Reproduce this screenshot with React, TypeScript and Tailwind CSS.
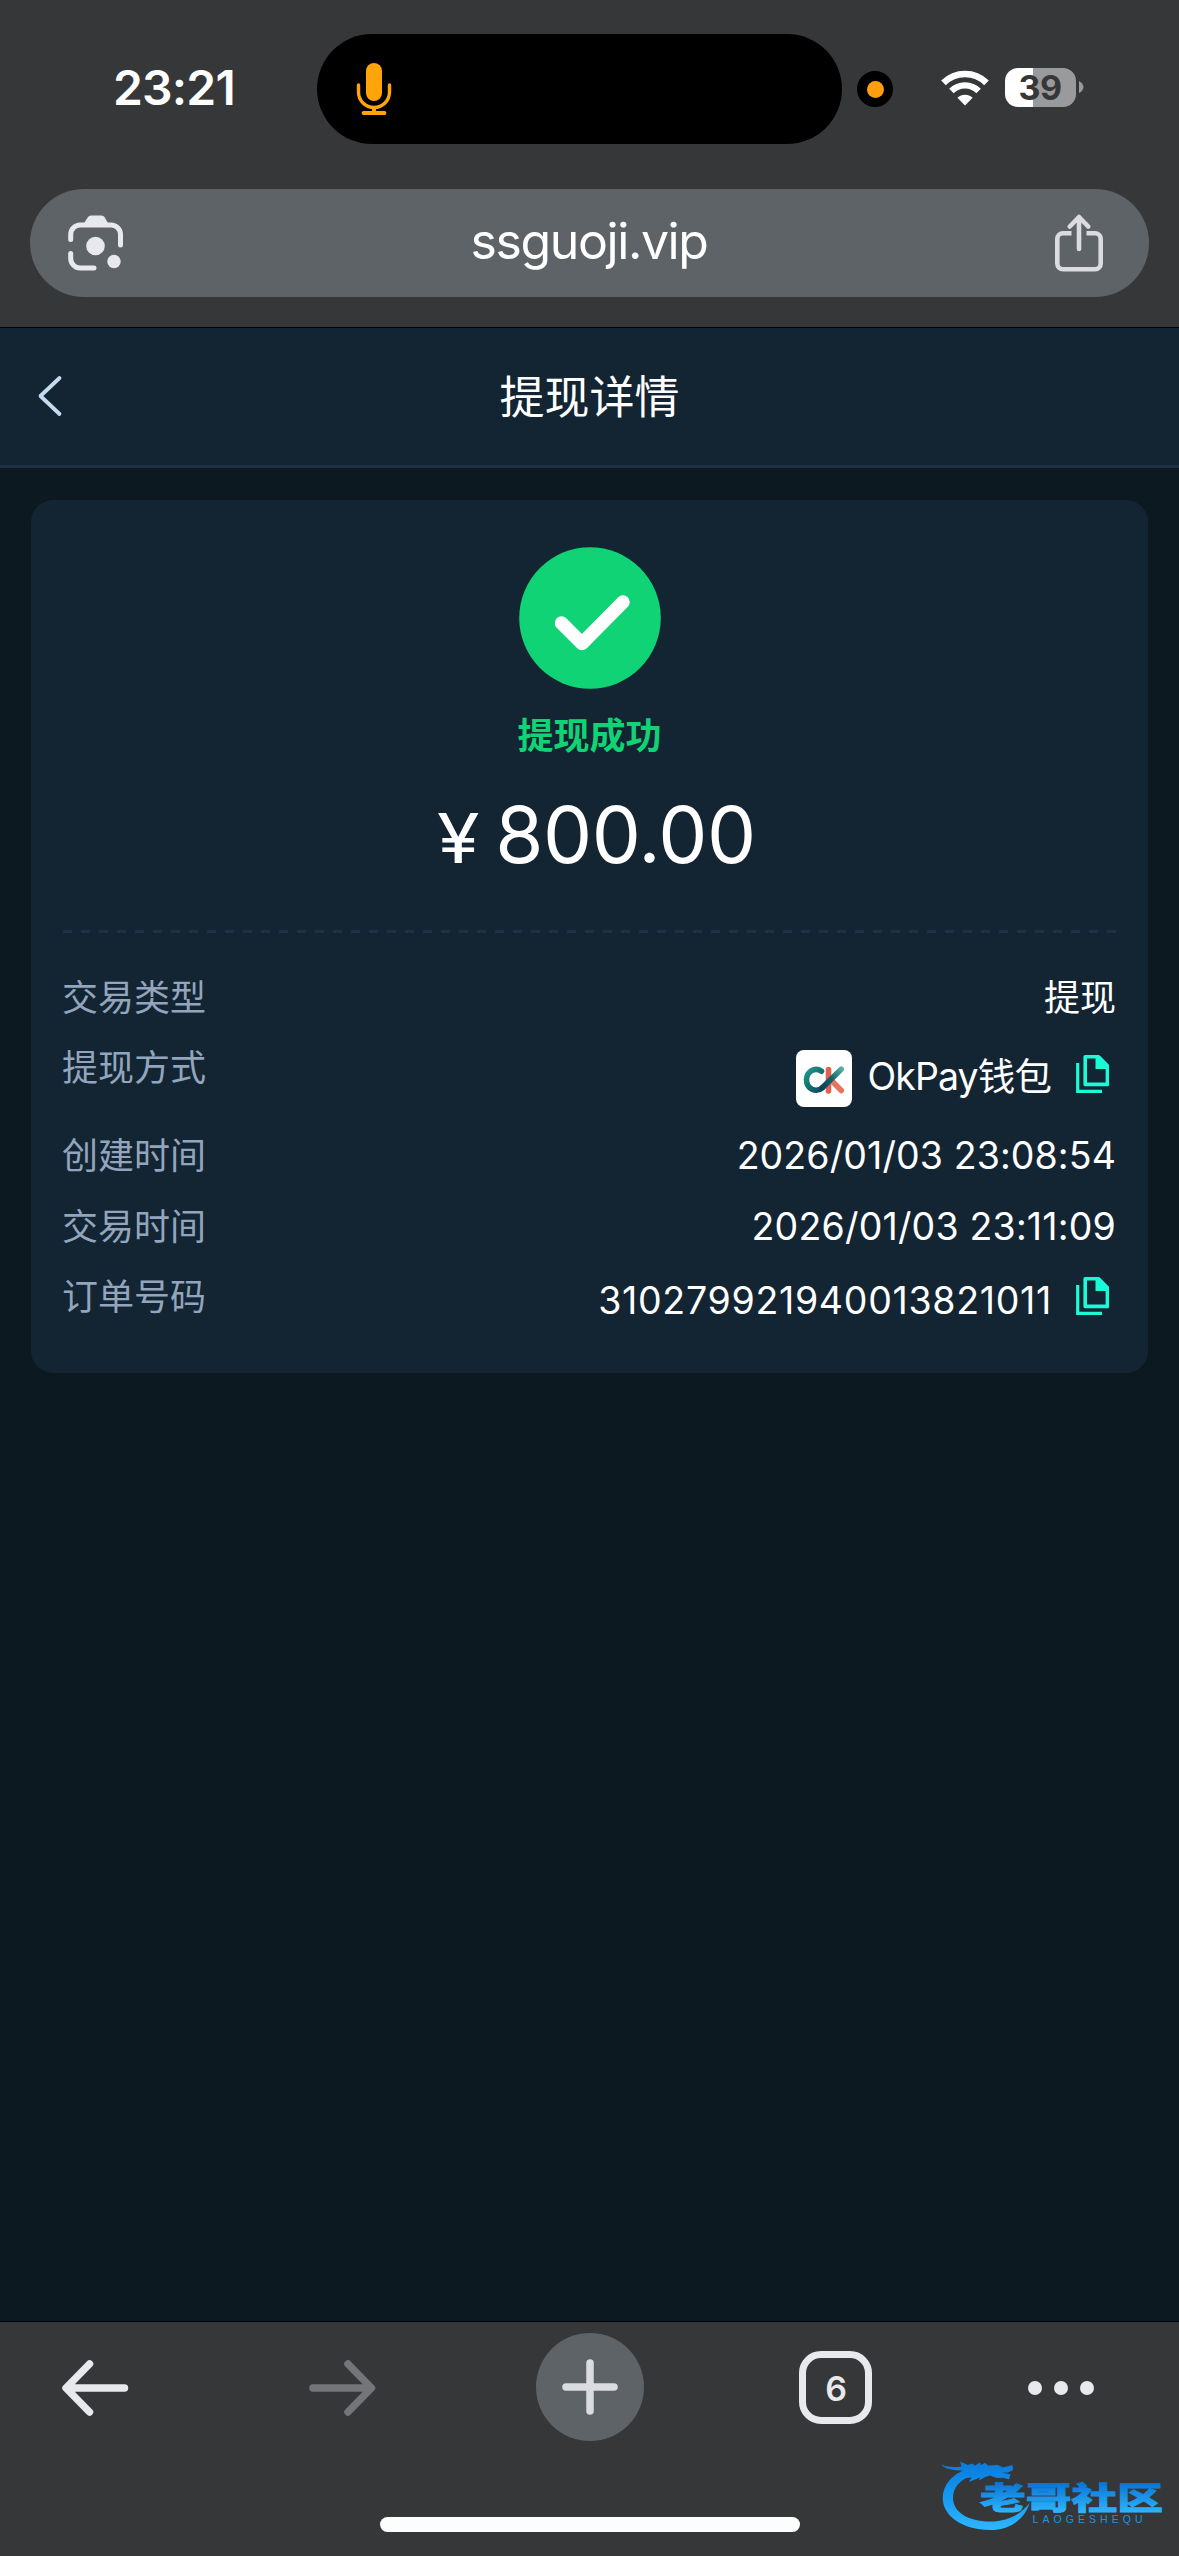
import type { ReactNode } from 'react';

const latin = "font-['Inter','Noto_Sans_CJK_SC',sans-serif]";

const MicIcon = () => (
  <svg width="36" height="54" viewBox="0 0 36 54" fill="none" stroke="#ffa50a" strokeLinecap="round">
    <rect x="10" y="1" width="16" height="38" rx="8" fill="#ffa50a" stroke="none" />
    <path d="M2.5 23v7a15.5 15.5 0 0 0 31 0v-7" strokeWidth="3.4" />
    <path d="M18 46v5" strokeWidth="4" />
    <path d="M7.5 51h21" strokeWidth="3.8" />
  </svg>
);

const WifiIcon = () => (
  <svg width="48" height="36" viewBox="0 0 48 36" fill="none" stroke="#fff">
    <path d="M2.5 12.8a30.5 30.5 0 0 1 43 0" strokeWidth="6.6" />
    <path d="M10.4 21a19.3 19.3 0 0 1 27.2 0" strokeWidth="6.4" />
    <path d="M24 35.5 16.4 27.8a10.8 10.8 0 0 1 15.2 0Z" fill="#fff" stroke="none" />
  </svg>
);

const LensIcon = () => (
  <svg width="56" height="56" viewBox="0 0 56 56" fill="none" stroke="#e8e9ed" strokeWidth="5" strokeLinecap="round">
    <path d="M2.7 24.5v-5A9.5 9.5 0 0 1 12.2 10H43a9.5 9.5 0 0 1 9.5 9.5V30" />
    <path d="M2.7 38.5v5a9.5 9.5 0 0 0 9.5 9.5H26" />
    <path d="M15.5 9 20 2Q21 .5 23 .5h10.500Q35.500 .5 36.500 2l4 7Z" fill="#e8e9ed" stroke="none" />
    <circle cx="27.5" cy="31" r="9.3" fill="#e8e9ed" stroke="none" />
    <circle cx="46" cy="46.5" r="6.7" fill="#e8e9ed" stroke="none" />
  </svg>
);

const ShareIcon = () => (
  <svg width="50" height="58" viewBox="0 0 50 58" fill="none" stroke="#dbdce1" strokeWidth="4.6" strokeLinecap="round" strokeLinejoin="round">
    <path d="M17.5 19.3H9a5.7 5.7 0 0 0-5.7 5.7v24.5A5.7 5.7 0 0 0 9 55.2h32a5.7 5.7 0 0 0 5.7-5.7V25a5.7 5.7 0 0 0-5.7-5.7h-8.500" strokeLinecap="butt" />
    <path d="M25 35V3.5M15.8 12.5 25 3l9.2 9.5" />
  </svg>
);

const CopyIcon = () => (
  <svg width="33" height="38" viewBox="0 0 33 38" fill="none">
    <path d="M1.7 8v28.3H26" stroke="#1bfbd8" strokeWidth="3.2" />
    <path d="M9.2 1.8h13.3l8.9 9v18.6H9.2Z" stroke="#1bfbd8" strokeWidth="3.6" strokeLinejoin="round" />
    <path d="M19.5 1h4l9 9.5v3.4h-13Z" fill="#1bfbd8" />
  </svg>
);

const OkPayLogo = () => (
  <svg width="56" height="57" viewBox="0 0 56 57" className="rounded-lg bg-white" fill="none" strokeWidth="5.6" strokeLinecap="round">
    <defs>
      <linearGradient id="ok-ring" x1="8" y1="20" x2="30" y2="40" gradientUnits="userSpaceOnUse">
        <stop stopColor="#1f9d8c" />
        <stop offset="1" stopColor="#0b4157" />
      </linearGradient>
      <linearGradient id="ok-arm" x1="46" y1="18" x2="26" y2="40" gradientUnits="userSpaceOnUse">
        <stop stopColor="#55b5a2" />
        <stop offset=".5" stopColor="#12626c" />
        <stop offset="1" stopColor="#0b4157" />
      </linearGradient>
    </defs>
    <path d="M32.5 19.5v21.5" stroke="#e2604f" />
    <path d="M36 31 45.3 40.5" stroke="#e9735f" />
    <path d="M25.5 21.200C19 16.500 10.500 21.500 10.500 29.800c0 9 9.500 13.500 16 7.800" stroke="url(#ok-ring)" />
    <path d="M26.500 37.600 45.200 19.300" stroke="url(#ok-arm)" />
  </svg>
);

const StatusBar = () => (
  <div className="flex h-[189px] items-start">
    <div className={`${latin} mt-[58px] ml-[113px] w-[204px] text-[48px] leading-[60px] font-semibold tracking-[-0.8px] text-white`}>23:21</div>
    <div className="mt-[34px] flex h-[110px] w-[525px] items-center rounded-full bg-black pl-[39px]">
      <MicIcon />
    </div>
    <div className="mt-[71px] ml-[15px] flex size-9 items-center justify-center rounded-full bg-black">
      <div className="size-[17px] rounded-full bg-[#ff9f0f]" />
    </div>
    <div className="mt-[70px] ml-[48px]">
      <WifiIcon />
    </div>
    <div className={`${latin} mt-[68px] ml-4 flex h-[39px] w-[71px] items-center justify-center rounded-[13px] bg-[linear-gradient(90deg,#fff_28px,#9a9a9c_28px)] pr-px text-[34px] font-bold tracking-[-0.5px] text-[#363738]`}>
      39
    </div>
    <svg width="5" height="14" viewBox="0 0 5 14" className="mt-[80px] ml-[3px]">
      <path d="M0 1q4 2 4.500 6Q4 11 0 13Z" fill="#9a9a9c" />
    </svg>
  </div>
);

const AddressBar = () => (
  <div className="mx-[30px] flex h-[108px] items-center justify-between rounded-full bg-[#5e6367] pr-[45px] pl-[38px]">
    <LensIcon />
    <div className={`${latin} mb-[4px] text-[50px] leading-none tracking-[-1.4px] text-white`}>ssguoji.vip</div>
    <ShareIcon />
  </div>
);

const PageHeader = () => (
  <div className="mt-[30px] grid h-[141px] grid-cols-[1fr_auto_1fr] items-center border-t border-b-[3px] border-t-black border-b-[#1a3149] bg-[#132433]">
    <svg width="26" height="42" viewBox="0 0 26 42" fill="none" className="mb-[2px] ml-[37px]">
      <path d="M22.500 3 3.500 21l19 18" stroke="#c5dbf0" strokeWidth="3.800" strokeLinecap="round" strokeLinejoin="round" />
    </svg>
    <h1 className={`${latin} mt-[2px] text-[45px] leading-none text-white`}>提现详情</h1>
  </div>
);

interface RowProps {
  label: string;
  className: string;
  children: ReactNode;
}

const Row = ({ label, className, children }: RowProps) => (
  <div className={`flex items-start justify-between ${className}`}>
    <span className="text-[36px] leading-[56px] text-[#92a5bc]">{label}</span>
    <div className="flex items-start text-[37.500px] leading-[55px] text-white">{children}</div>
  </div>
);

const DetailCard = () => (
  <div className={`${latin} mx-[31px] mt-8 h-[873px] rounded-[22px] bg-[#132433] pt-[47px] pr-8 pl-[31px]`}>
    <div className="flex flex-col items-center pl-px">
      <svg width="142" height="142" viewBox="0 0 142 142" fill="none">
        <circle cx="71" cy="71" r="70.800" fill="#0fd375" />
        <path d="m42.500 76 20.500 20.500L104 55" stroke="#fff" strokeWidth="13.500" strokeLinecap="round" strokeLinejoin="round" />
      </svg>
      <div className="mt-5 text-[36px] leading-[54px] font-bold text-[#0fd375]">提现成功</div>
      <div className="mt-6 flex items-baseline pl-3 leading-[96px] text-white">
        <span className="origin-left translate-x-[2px] scale-x-[1.12] text-[69px]">¥</span>
        <span className="ml-[22px] text-[78px] tracking-[-0.500px]">800.00</span>
      </div>
    </div>
    <div className="mt-[44px] ml-px h-[3px] bg-[repeating-linear-gradient(90deg,#1a3349_0_9px,transparent_9px_18px)]" />
    <div className="mt-[37px] flex flex-col">
      <Row label="交易类型" className="h-[70px]">
        <span className="text-[36px] leading-[56px]">提现</span>
      </Row>
      <Row label="提现方式" className="h-[88px]">
        <div className="mt-[10px]">
          <OkPayLogo />
        </div>
        <span className="mt-[9px] ml-4 tracking-[-0.900px]">OkPay钱包</span>
        <div className="mt-[15px] mr-[7px] ml-[25px]">
          <CopyIcon />
        </div>
      </Row>
      <Row label="创建时间" className="h-[71px]">
        <span className="tracking-[0.100px]">2026/01/03 23:08:54</span>
      </Row>
      <Row label="交易时间" className="h-[70px]">
        <span className="tracking-[0.180px]">2026/01/03 23:11:09</span>
      </Row>
      <Row label="订单号码" className="h-[60px]">
        <span className="mt-[4px] tracking-[0.700px]">310279921940013821011</span>
        <div className="mt-[8px] mr-[7px] ml-[24px]">
          <CopyIcon />
        </div>
      </Row>
    </div>
  </div>
);

const Watermark = () => (
  <svg width="230" height="84" viewBox="0 0 230 84" className="absolute top-[2452px] left-[938px]">
    <defs>
      <linearGradient id="wm" x1="0" y1="8" x2="0" y2="78" gradientUnits="userSpaceOnUse">
        <stop stopColor="#0a78da" />
        <stop offset=".4" stopColor="#0f92ee" />
        <stop offset="1" stopColor="#2db7ff" />
      </linearGradient>
      <linearGradient id="wm-text" x1="0" y1="0" x2="0" y2="1">
        <stop offset=".2" stopColor="#0874d6" />
        <stop offset=".9" stopColor="#2fb8ff" />
      </linearGradient>
    </defs>
    <path d="M29 17C14 22 4.700 33 4.700 46c0 18 20 32 47.300 32 20 0 35-11 39.500-27C83 62 70 69.500 52 69.500 30 69.500 15 60 15 46c0-11 7-19 21-23Z" fill="url(#wm)" />
    <path d="M3 12.500c7 2.500 12 2.800 19.500 2.200 4-.3 7 .3 9.500 1.300l-4 3.500c-6-2.500-18 .5-25-7Z" fill="url(#wm)" />
    <path d="M22 9.500 30 13l4-1.500 3 2 5-3 1 2.500 4-2 3 2.500 10-.5 5 2.500 9.500-2.500.5 5-5 2.500-6.500.200 9 1.500-1.500 5-6-1.500-6 .300-7-2.500-5 1.500-6 3.500 1-3-5 2-6 2.500 2.500-4.500-6 .500-3-8Z" fill="url(#wm)" />
    <text x="42" y="57" textLength="183" lengthAdjust="spacingAndGlyphs" className="font-['Noto_Sans_CJK_SC',sans-serif] text-[30.500px] font-black" fill="url(#wm-text)" stroke="url(#wm-text)" strokeWidth="0.8">
      老哥社区
    </text>
    <text x="94.500" y="70.500" textLength="110" className="font-['Liberation_Sans',sans-serif] text-[10.500px]" fill="#1f93e0">
      LAOGESHEQU
    </text>
  </svg>
);

const BottomBar = () => (
  <div className="h-[235px] border-t border-black bg-[#363738]">
    <div className="flex items-center pt-[11px]">
      <svg width="70" height="60" viewBox="0 0 70 60" fill="none" stroke="#e8e9ed" strokeWidth="7.500" strokeLinecap="round" strokeLinejoin="round" className="ml-[60px]">
        <path d="M64.500 31H7M29.500 7 6 31l23.500 24" />
      </svg>
      <svg width="70" height="60" viewBox="0 0 70 60" fill="none" stroke="#747578" strokeWidth="7.500" strokeLinecap="round" strokeLinejoin="round" className="ml-[178px]">
        <path d="M5 31h58M40 7l23.500 24L40 55" />
      </svg>
      <div className="ml-[158px] flex size-[108px] items-center justify-center rounded-full bg-[#5e6367]">
        <svg width="56" height="56" viewBox="0 0 56 56" stroke="#dbdce1" strokeWidth="7.500" strokeLinecap="round">
          <path d="M28 4v48M4 28h48" />
        </svg>
      </div>
      <div className={`${latin} mt-[1px] ml-[155px] flex size-[73px] items-center justify-center rounded-[22px] border-[7px] border-[#e8e9ed] pt-[3px] pl-px text-[34px] leading-none font-semibold text-[#e8e9ed]`}>
        6
      </div>
      <div className="mt-[2px] ml-[155.500px] flex gap-[11.700px]">
        <div className="size-[14.500px] rounded-full bg-[#e8e9ed]" />
        <div className="size-[14.500px] rounded-full bg-[#e8e9ed]" />
        <div className="size-[14.500px] rounded-full bg-[#e8e9ed]" />
      </div>
    </div>
    <div className="mt-[76px] ml-[380px] h-[15px] w-[420px] rounded-full bg-[#fdfdfd]" />
  </div>
);

const App = () => (
  <div className="relative flex h-[2556px] w-[1179px] flex-col overflow-hidden bg-[#363738]">
    <StatusBar />
    <AddressBar />
    <PageHeader />
    <div className="flex-1 bg-[#0c1921]">
      <DetailCard />
    </div>
    <BottomBar />
    <Watermark />
  </div>
);

export default App;
